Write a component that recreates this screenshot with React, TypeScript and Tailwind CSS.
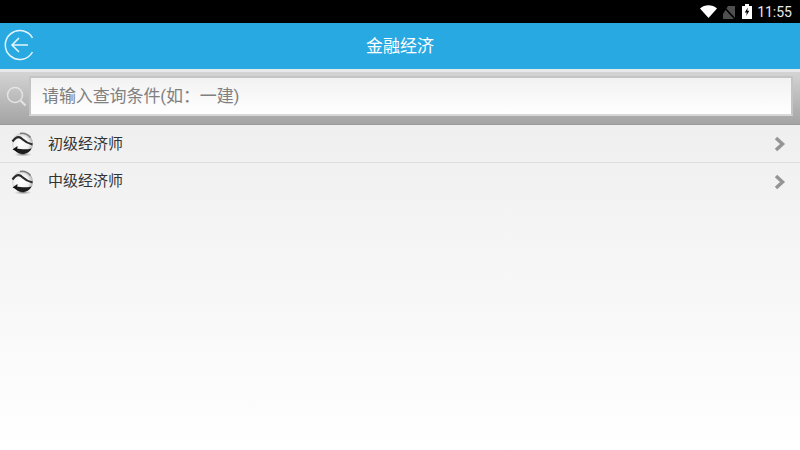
const cjk = '"Roboto", "Noto Sans CJK SC", sans-serif'

function BackIcon() {
  return (
    <svg width="32" height="32" viewBox="0 0 32 32" fill="none" stroke="#e4f6fd" strokeWidth="1.5">
      <path d="M28.500 23A14.500 14.500 0 1 1 28.500 9" />
      <path d="M24 16H8M15 9l-7 7 7 7" strokeWidth="1.6" />
    </svg>
  )
}

function SearchIcon() {
  return (
    <svg width="22" height="22" viewBox="0 0 22 22" fill="none" stroke="#e4e4e4" strokeWidth="1.5">
      <circle cx="10" cy="10" r="7.500" />
      <path d="M15.500 15.500l5 5" strokeWidth="2" />
    </svg>
  )
}

function StatusIcons() {
  return (
    <div className="flex items-center">
      <svg width="17" height="13" viewBox="0 0 17 13" className="mr-[5px]">
        <path d="M0 3.500C4.800-.8 12.200-.8 17 3.500L8.500 13z" fill="#fff" />
      </svg>
      <svg width="13" height="14" viewBox="0 0 13 14" className="mr-[7px]">
        <path d="M13 1v13H1V9L6 1z" fill="#4f4f4f" />
        <path d="M1 1l12 13" stroke="#000" strokeWidth="1.6" />
      </svg>
      <svg width="10" height="15" viewBox="0 0 10 15" className="mr-[5px]">
        <path d="M0 2h3V0h4v2h3v13H0z" fill="#fff" />
        <path d="M5.800 3.500L2.800 8.500h2L4.200 12l3.100-5.300h-2z" fill="#000" />
      </svg>
    </div>
  )
}

function GlobeIcon() {
  return (
    <svg width="24" height="26" viewBox="0 0 24 26" className="shrink-0">
      <defs>
        <radialGradient id="ball" cx="0.45" cy="0.5" r="0.58">
          <stop offset="0" stopColor="#ffffff" />
          <stop offset="0.6" stopColor="#f2f2f2" />
          <stop offset="0.88" stopColor="#bdbdbd" />
          <stop offset="1" stopColor="#777777" />
        </radialGradient>
        <radialGradient id="shade" cx="0.5" cy="0.5" r="0.5">
          <stop offset="0" stopColor="#555" stopOpacity="0.75" />
          <stop offset="1" stopColor="#999" stopOpacity="0" />
        </radialGradient>
      </defs>
      <ellipse cx="12" cy="23.500" rx="9" ry="2" fill="url(#shade)" />
      <circle cx="11.500" cy="12.500" r="10.500" fill="url(#ball)" />
      <path d="M1.500 10.500C4 7 7 5 10 7c2.500 2 4.500 5 11.500 6.500" fill="none" stroke="#2a2a2a" strokeWidth="2.200" />
      <path d="M9 2.500c4-.8 8 1 10.500 4" fill="none" stroke="#7a7a7a" strokeWidth="1.500" />
      <path d="M3 18c4-1 10 1.500 17.500-.5-2 4-5.500 5.500-9 5.500-3.500 0-6.500-1.500-8.500-5z" fill="#1c1c1c" />
      <path d="M1.500 18.500l5-3.500-.5 5.500z" fill="#111" />
    </svg>
  )
}

function Chevron() {
  return (
    <svg width="12" height="16" viewBox="0 0 12 16" fill="none" stroke="#959595" strokeWidth="3.5">
      <path d="M2 2l6.500 6L2 14" />
    </svg>
  )
}

function Row({ label, last }: { label: string; last?: boolean }) {
  return (
    <div className={last ? 'flex h-[37px] items-center pl-[11px] pr-[14px]' : 'flex h-[37px] items-center border-b border-[#dcdcdc] pl-[11px] pr-[14px]'}>
      <GlobeIcon />
      <span className="ml-[13px] flex-1 text-[15px] text-[#333]">{label}</span>
      <Chevron />
    </div>
  )
}

export default function App() {
  return (
    <div
      className="flex h-[450px] w-[800px] flex-col overflow-hidden bg-gradient-to-b from-[#e9e9e9] to-[#ffffff]"
      style={{ fontFamily: cjk }}
    >
      <div className="flex h-[23px] shrink-0 items-center justify-end bg-black pr-[8px]">
        <StatusIcons />
        <span className="text-[14px] leading-none text-[#e8e8e8]">11:55</span>
      </div>
      <div className="relative flex h-[46px] shrink-0 items-center justify-center bg-[#29a9e2] pt-[2px]">
        <div className="absolute left-[4px] top-[6px]">
          <BackIcon />
        </div>
        <span className="text-[17px] text-white">金融经济</span>
      </div>
      <div className="flex h-[56px] shrink-0 items-center border-b border-[#9a9a9a] border-t-[3px] border-t-[#e6eaea] bg-gradient-to-b from-[#d4d4d4] to-[#a4a4a4] pb-[4px] pl-[5px] pr-[7px]">
        <SearchIcon />
        <div className="ml-[2px] flex h-[40px] flex-1 items-center border-2 border-[#c4c4c4] border-b-[#d8d8d8] bg-gradient-to-b from-[#f2f2f2] to-[#ffffff] pl-[11px] pt-[2px] text-[17px] tracking-[-0.1px] text-[#808080]">
          请输入查询条件(如：一建)
        </div>
      </div>
      <div className="pt-px">
        <Row label="初级经济师" />
        <Row label="中级经济师" last />
      </div>
    </div>
  )
}
